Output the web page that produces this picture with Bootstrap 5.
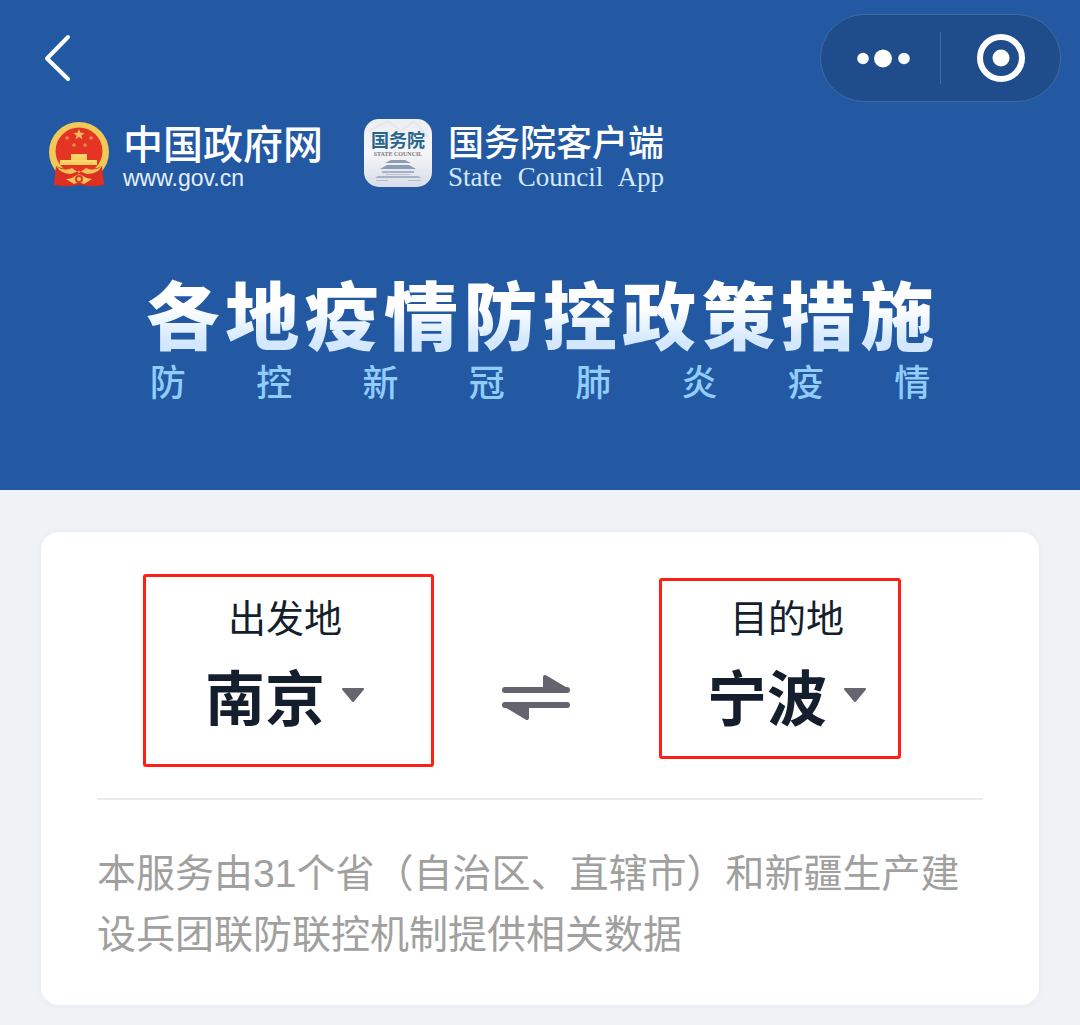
<!DOCTYPE html>
<html lang="zh-CN">
<head>
<meta charset="utf-8">
<meta name="viewport" content="width=device-width, initial-scale=1">
<title>各地疫情防控政策措施</title>
<link href="https://cdn.jsdelivr.net/npm/bootstrap@5.3.0/dist/css/bootstrap.min.css" rel="stylesheet">
<style>
  body { background: #eff3f6; color: #141e2d; font-family: "Liberation Sans", "Noto Sans CJK SC", sans-serif; }
  .hero { background: #2359a3; padding-bottom: 91px; }
  .topbar { padding: 14px 19px 0 43px; }
  .capsule { width: 241px; height: 88px; border: 1px solid #40699f; border-radius: 44px; background: #1f4d8b; }
  .capsule-half { flex: 1 1 0; }
  .capsule-line { width: 1px; height: 52px; background: #40699f; }
  .brands { padding: 17px 49px 0; gap: 41px; }
  .brand-logo { gap: 14px; }
  .brand-gov, .brand-app { font-family: "Noto Sans CJK SC", sans-serif; font-weight: 500; color: #fff; }
  .brand-gov { font-size: 40px; line-height: 46px; }
  .brand-url { font-size: 23px; line-height: 26px; color: #e4effc; }
  .brand-app { font-size: 36px; line-height: 42px; }
  .brand-en { font-family: "Liberation Serif", serif; font-size: 27px; line-height: 32px; color: #d5e8fb; text-align-last: justify; }
  .hero-text { width: 73%; padding-top: 70px; }
  .hero-title { font-family: "Noto Sans CJK SC", sans-serif; font-weight: 900; font-size: 74px; line-height: 98px; text-align-last: justify;
    background: linear-gradient(#fff 45%, #d3e8ff 80%); -webkit-background-clip: text; background-clip: text; color: transparent; white-space: nowrap; }
  .hero-sub { font-family: "Noto Sans CJK SC", sans-serif; font-weight: 500; font-size: 36px; line-height: 38px; color: #91cdfb; text-align-last: justify; padding: 0 4px; }
  .panel { margin: 42px 41px 19px; border-radius: 18px; padding: 64px 56px 40px; box-shadow: 0 0 6px #e4e9ee; }
  .route { padding: 0 8px 63px 0; }
  .route-label { font-size: 38px; line-height: 46px; margin-bottom: 13px; }
  .route-select { appearance: none; border: 0; padding: 0; background: transparent; color: #141e2d; font-family: "Noto Sans CJK SC", sans-serif; font-weight: 700; font-size: 60px; line-height: 80px; height: 80px; }
  .route-mid { width: 126px; padding-top: 78px; }
  .frame-from::after, .frame-to::after { content: ""; position: absolute; border: 3px solid #ff1f14; border-radius: 3px; pointer-events: none; }
  .frame-from::after { inset: -22px 39px -32px 46px; }
  .frame-to::after { inset: -18px 74px -24px 60px; }
  .note { border-top: 2px solid #ebebed; padding-top: 43px; font-size: 39px; line-height: 61px; color: #a0a09e; }
</style>
<script src="https://cdn.jsdelivr.net/npm/bootstrap@5.3.0/dist/js/bootstrap.bundle.min.js"></script>
</head>
<body>
<header class="hero">
  <div class="topbar d-flex justify-content-between align-items-center">
    <button type="button" class="btn p-0 border-0" aria-label="返回">
      <svg class="d-block" width="30" height="50" viewBox="0 0 30 50" fill="none" stroke="#fff" stroke-width="4" stroke-linecap="round" stroke-linejoin="round"><path d="M25 4 4 25.500 25 46"/></svg>
    </button>
    <div class="capsule d-flex align-items-center">
      <button type="button" class="btn p-0 border-0 capsule-half" aria-label="更多">
        <svg width="60" height="24" viewBox="0 0 60 24" fill="#fff"><circle cx="12" cy="12.500" r="5.800"/><circle cx="32" cy="12.500" r="9"/><circle cx="53" cy="12.500" r="5.800"/></svg>
      </button>
      <span class="capsule-line"></span>
      <button type="button" class="btn p-0 border-0 capsule-half" aria-label="关闭">
        <svg width="50" height="50" viewBox="0 0 50 50"><circle cx="25" cy="25" r="21" fill="none" stroke="#fff" stroke-width="6"/><circle cx="25" cy="25" r="8.500" fill="#fff"/></svg>
      </button>
    </div>
  </div>
  <div class="brands d-flex align-items-start">
    <div class="brand-logo d-flex align-items-start">
      <svg width="60" height="68" viewBox="0 0 60 68" aria-hidden="true">
        <g transform="translate(0 2)">
        <path d="M9 47 5 64q9 2 17 1l8-1 8 1q9 1 17-1l-4-17z" fill="#d92b20"/>
        <circle cx="30" cy="31" r="30" fill="#f2c957"/>
        <circle cx="30" cy="30" r="23.500" fill="#e43524"/>
        <path d="m30 8 1.500 3.700 4 .2-3.100 2.500 1 3.900-3.400-2.200-3.400 2.200 1-3.900-3.100-2.500 4-.2z" fill="#f4bd57"/>
        <g fill="#ef8b42"><circle cx="18" cy="17" r="1.800"/><circle cx="42" cy="17" r="1.800"/><circle cx="25" cy="24" r="1.800"/><circle cx="36" cy="24" r="1.800"/></g>
        <path d="M22 33h16v6h10v5H11v-5h11z" fill="#f7ce5b"/>
        <path d="M12 40h35M23 35h14" stroke="#fbe088"/>
        <path d="M7 45q8 4 15 3 7 6 16 0 8 1 15-3l2 18q-8 2-16 0l-9-3-9 3q-8 2-16 0z" fill="#dc3022"/>
        <path d="M7 45q8 6 16 2l7 5 7-5q8 4 16-2-4 8-15 8l-8-3-8 3Q12 53 7 45z" fill="#f1c157"/>
        <path d="M17 58q6 0 9-3l4-2 4 2q4 3 9 3l-8 5-5-2-5 2z" fill="#f3c45a"/>
        <circle cx="30" cy="58" r="4" fill="#df3a25"/><circle cx="30" cy="58" r="2" fill="#f4cb61"/>
        </g>
      </svg>
      <div>
        <div class="brand-gov">中国政府网</div>
        <div class="brand-url">www.gov.cn</div>
      </div>
    </div>
    <div class="d-flex align-items-start">
      <svg width="68" height="68" viewBox="0 0 68 68" role="img" aria-label="国务院">
        <defs><linearGradient id="tile" x2="0" y2="1"><stop stop-color="#eceef2"/><stop offset=".5" stop-color="#f5f6f8"/><stop offset="1" stop-color="#d7dde7"/></linearGradient></defs>
        <rect width="68" height="68" rx="15" fill="url(#tile)"/>
        <path d="M5 12 24 2l13 10L50 2l14 16" fill="none" stroke="#e4e7ec" stroke-width="2"/>
        <text x="34" y="28" text-anchor="middle" font-family="Noto Sans CJK SC, sans-serif" font-size="18" font-weight="700" fill="#28658e">国务院</text>
        <text x="34" y="37" text-anchor="middle" font-family="Liberation Serif, serif" font-size="6" font-weight="700" fill="#7c777b">STATE COUNCIL</text>
        <g fill="#8b9db5"><path d="M27 41h14l6 3H21zM23 46h22l7 4H16z"/><path d="M18 52h32v2H18zM14 57h40l4 2H11z" opacity=".7"/><path d="M22 55h24v1H22zM12 61h12v1H12zM44 61h13v1H44z" opacity=".5"/></g>
      </svg>
      <div class="ms-3">
        <div class="brand-app">国务院客户端</div>
        <div class="brand-en">State Council App</div>
      </div>
    </div>
  </div>
  <div class="hero-text mx-auto">
    <h1 class="hero-title m-0">各地疫情防控政策措施</h1>
    <p class="hero-sub m-0">防控新冠肺炎疫情</p>
  </div>
</header>
<main class="panel bg-white">
  <form class="route d-flex">
    <div class="frame-from position-relative flex-fill d-flex flex-column align-items-center">
      <label class="route-label" for="from">出发地</label>
      <div class="d-flex align-items-center gap-3">
        <select class="route-select" id="from"><option>南京</option></select>
        <svg width="24" height="16" viewBox="0 0 24 16" fill="#666570" stroke="#666570" stroke-width="2" stroke-linejoin="round"><path d="M2 2h20L12 14z"/></svg>
      </div>
    </div>
    <div class="route-mid text-center">
      <button type="button" class="btn p-0 border-0" aria-label="交换">
        <svg class="d-block" width="70" height="46" viewBox="0 0 70 46" fill="#64636e" stroke="#64636e" stroke-linecap="round" stroke-linejoin="round"><path d="M4 16h62M4 31h62" stroke-width="6"/><path d="M44 3v13h22zM26 44V31H4z" stroke-width="4"/></svg>
      </button>
    </div>
    <div class="frame-to position-relative flex-fill d-flex flex-column align-items-center">
      <label class="route-label" for="to">目的地</label>
      <div class="d-flex align-items-center gap-3">
        <select class="route-select" id="to"><option>宁波</option></select>
        <svg width="24" height="16" viewBox="0 0 24 16" fill="#666570" stroke="#666570" stroke-width="2" stroke-linejoin="round"><path d="M2 2h20L12 14z"/></svg>
      </div>
    </div>
  </form>
  <p class="note mb-0">本服务由31个省（自治区、直辖市）和新疆生产建设兵团联防联控机制提供相关数据</p>
</main>
</body>
</html>
